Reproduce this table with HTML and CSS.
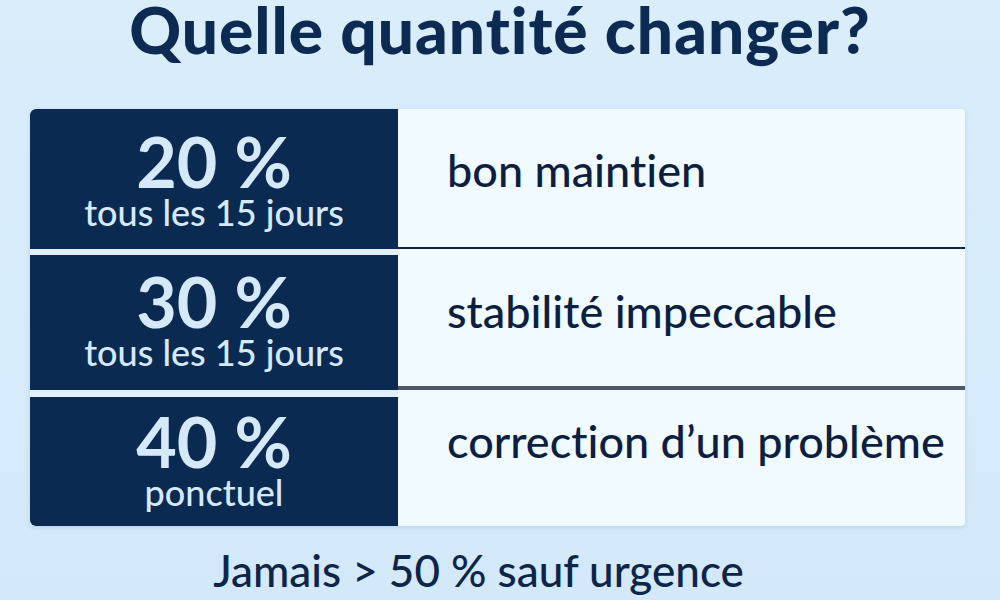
FILE: index.html
```html
<!DOCTYPE html>
<html lang="fr">
<head>
<meta charset="utf-8">
<title>Quelle quantité changer?</title>
<link rel="stylesheet" href="styles.css">
</head>
<body>
<main class="page">
  <h1 class="title">Quelle quantité changer?</h1>
  <section class="table">
    <div class="cell-left row1">
      <div class="pct">20 %</div>
      <div class="freq">tous les 15 jours</div>
    </div>
    <div class="cell-right row1 line-dark"><span>bon maintien</span></div>
    <div class="gap-left"></div>
    <div class="gap-right"></div>
    <div class="cell-left row2">
      <div class="pct">30 %</div>
      <div class="freq">tous les 15 jours</div>
    </div>
    <div class="cell-right row2 line-grey"><span>stabilité impeccable</span></div>
    <div class="gap-left"></div>
    <div class="gap-right"></div>
    <div class="cell-left row3 last">
      <div class="pct">40 %</div>
      <div class="freq">ponctuel</div>
    </div>
    <div class="cell-right row3"><span>correction d’un problème</span></div>
  </section>
  <p class="note">Jamais &gt; 50 % sauf urgence</p>
</main>
</body>
</html>
```
FILE: styles.css
```css
html, body {
  margin: 0;
  padding: 0;
}
body {
  width: 1000px;
  height: 600px;
  overflow: hidden;
  background: linear-gradient(180deg, #d9edfb 0%, #d3e8f9 100%);
  font-family: Lato, "Open Sans", sans-serif;
  font-variant-ligatures: none;
  color: #0c2549;
}
.page {
  display: flex;
  flex-direction: column;
  align-items: center;
}
.title {
  margin: 0;
  height: 109px;
  font-size: 64px;
  font-weight: 900;
  line-height: 60px;
  letter-spacing: 1px;
  color: #0c2a52;
}
.table {
  align-self: flex-start;
  margin-left: 30px;
  width: 935px;
  display: grid;
  grid-template-columns: 368px 567px;
  grid-template-rows: 140px 6px 135px 7px 129px;
  background: #f0faff;
  border-radius: 4px;
  box-shadow: 0 1px 4px rgba(60, 110, 160, 0.18);
}
.cell-left {
  background: #0a2a52;
  color: #d6e9fb;
  display: flex;
  flex-direction: column;
  align-items: center;
}
.cell-left.row1 { border-top-left-radius: 6px; padding-top: 20px; }
.cell-left.row2 { padding-top: 14px; }
.cell-left.row3 { padding-top: 12px; }
.cell-left.last { border-bottom-left-radius: 6px; }
.pct {
  font-size: 70px;
  font-weight: 700;
  line-height: 64px;
}
.freq {
  font-size: 36px;
  font-weight: 500;
  line-height: 38px;
}
.cell-right {
  padding-left: 49px;
  font-size: 45px;
  font-weight: 500;
  line-height: 50px;
  color: #0d1f40;
  box-sizing: border-box;
}
.cell-right.row1 { padding-top: 36px; }
.cell-right.row2 { padding-top: 31px; }
.cell-right.row3 { padding-top: 19px; }
.line-dark { border-bottom: 2px solid #0c2548; }
.line-grey { border-bottom: 4px solid #4a5870; }
.gap-left { background: #e3f0fb; }
.gap-right { background: transparent; }
.note {
  margin: 19px 43px 0 0;
  font-size: 44px;
  font-weight: 500;
  line-height: 50px;
  color: #0c2549;
}
```
